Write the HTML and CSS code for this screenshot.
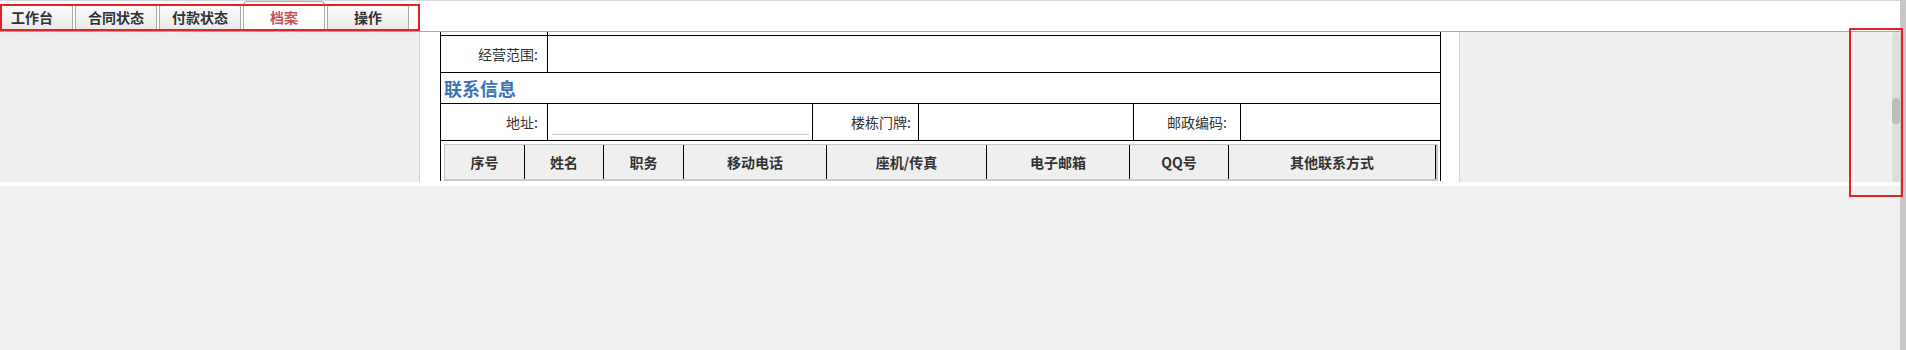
FILE: index.html
```html
<!DOCTYPE html>
<html lang="zh-CN">
<head>
  <meta charset="UTF-8">
  <meta name="viewport" content="width=device-width, initial-scale=1.0">
  <title>档案</title>
  <link rel="stylesheet" href="styles.css">
</head>
<body>
<div class="screen">
  <div class="window">
    <div class="tabbar">
      <ul class="tabs">
        <li class="tab">工作台</li>
        <li class="tab">合同状态</li>
        <li class="tab">付款状态</li>
        <li class="tab active">档案</li>
        <li class="tab">操作</li>
      </ul>
    </div>
    <div class="frame-wrap">
      <div class="frame">
        <div class="gutter"></div>
        <div class="panel">
          <div class="form">
            <div class="row cut">
              <div class="cell label"></div>
              <div class="cell fill"></div>
            </div>
            <div class="row">
              <div class="cell label">经营范围:</div>
              <div class="cell fill"></div>
            </div>
            <div class="row heading">联系信息</div>
            <div class="row">
              <div class="cell label">地址:</div>
              <div class="cell field-addr"><input class="line-input" type="text"></div>
              <div class="cell label label-door">楼栋门牌:</div>
              <div class="cell field-door"></div>
              <div class="cell label label-zip">邮政编码:</div>
              <div class="cell fill"></div>
            </div>
            <div class="row nested">
              <div class="contacts">
                <div class="th c-no">序号</div>
                <div class="th c-name">姓名</div>
                <div class="th c-job">职务</div>
                <div class="th c-mobile">移动电话</div>
                <div class="th c-phone">座机/传真</div>
                <div class="th c-mail">电子邮箱</div>
                <div class="th c-qq">QQ号</div>
                <div class="th c-other">其他联系方式</div>
              </div>
            </div>
          </div>
        </div>
        <div class="frame-rest"></div>
        <div class="scrollbar"><div class="thumb"></div></div>
      </div>
    </div>
  </div>
  <div class="edge"></div>

  <!-- annotation boxes over the screenshot -->
  <div class="mark mark-tabs"></div>
  <div class="mark mark-scroll"></div>
</div>
</body>
</html>
```

FILE: styles.css
```css
body {
  margin: 0;
  background: #f0f0f0;
  font-family: "Noto Sans CJK SC", "Microsoft YaHei", sans-serif;
  font-size: 14px;
  color: #333;
}
.screen {
  position: relative;
  display: flex;
  height: 350px;
  overflow: hidden;
}
.window {
  flex: 1;
  display: flex;
  flex-direction: column;
}
.edge {
  width: 6px;
  background: #c8c8c8;
}

/* tab strip */
.tabbar {
  height: 30px;
  background: #fff;
  border-top: 1px solid #d6d6d6;
  border-bottom: 1px solid #a8a8a8;
}
.tabs {
  display: flex;
  align-items: flex-end;
  gap: 2px;
  height: 100%;
  margin: 0 0 0 -9px;
  padding: 0;
  list-style: none;
}
.tab {
  box-sizing: border-box;
  width: 82px;
  height: 27px;
  line-height: 25px;
  text-align: center;
  font-weight: bold;
  color: #333;
  border: 1px solid #aaa;
  border-bottom: none;
  border-radius: 4px 4px 0 0;
  background: linear-gradient(#fbfbfb, #e9e9e9);
}
.tab.active {
  height: 30px;
  line-height: 30px;
  color: #c8525a;
  background: #fff;
}

/* content frame */
.frame-wrap {
  background: #fff;
  padding-bottom: 4px;
}
.frame {
  display: flex;
  height: 150px;
  background: #efefef;
}
.gutter {
  width: 419px;
  border-right: 1px solid #d6d6d6;
}
.panel {
  width: 1040px;
  padding-left: 20px;
  box-sizing: border-box;
  background: #fff;
  border-right: 1px solid #d6d6d6;
  overflow: hidden;
}
.frame-rest {
  flex: 1;
}
.scrollbar {
  width: 8px;
  background: #dedede;
  border-radius: 4px;
}
.thumb {
  height: 26px;
  margin-top: 66px;
  background: #bdbdbd;
  border-radius: 4px;
}

/* form table */
.form {
  width: 1001px;
  box-sizing: border-box;
  border-left: 1px solid #000;
  border-right: 1px solid #000;
}
.row {
  display: flex;
  box-sizing: border-box;
  height: 37px;
  border-bottom: 1px solid #000;
}
.row.cut {
  height: 4px;
}
.row.heading {
  height: 31px;
  line-height: 30px;
  padding-left: 3px;
  font-size: 18px;
  font-weight: bold;
  color: #3b73ba;
}
.cell {
  box-sizing: border-box;
  border-right: 1px solid #000;
  line-height: 36px;
}
.label {
  width: 107px;
  padding-right: 9px;
  text-align: right;
}
.label-door {
  width: 106px;
  padding-right: 7px;
}
.label-zip {
  padding-right: 13px;
}
.field-addr {
  width: 265px;
  padding: 0 4px;
}
.field-door {
  width: 215px;
}
.fill {
  flex: 1;
  border-right: none;
}
.line-input {
  display: block;
  box-sizing: border-box;
  width: 257px;
  height: 31px;
  margin: 0;
  padding: 0;
  border: none;
  border-bottom: 1px solid #ccc;
  outline: none;
}

/* contacts sub table */
.row.nested {
  height: auto;
  padding: 3px 0 0 3px;
  border-bottom: none;
}
.contacts {
  display: flex;
  border: 1px solid #c8c8c8;
  border-right-width: 2px;
  border-bottom-width: 2px;
  background: #efefef;
}
.th {
  box-sizing: border-box;
  height: 34px;
  line-height: 34px;
  text-align: center;
  font-weight: bold;
  border-right: 1px solid #000;
}
.c-no { width: 80px; }
.c-name { width: 79px; }
.c-job { width: 80px; }
.c-mobile { width: 143px; }
.c-phone { width: 160px; }
.c-mail { width: 143px; }
.c-qq { width: 99px; }
.c-other { width: 207px; }

.mark {
  position: absolute;
  box-sizing: border-box;
  border: 2px solid #e6212a;
}
.mark-tabs {
  left: 0;
  top: 4px;
  width: 420px;
  height: 27px;
}
.mark-scroll {
  left: 1849px;
  top: 28px;
  width: 54px;
  height: 169px;
}
```
